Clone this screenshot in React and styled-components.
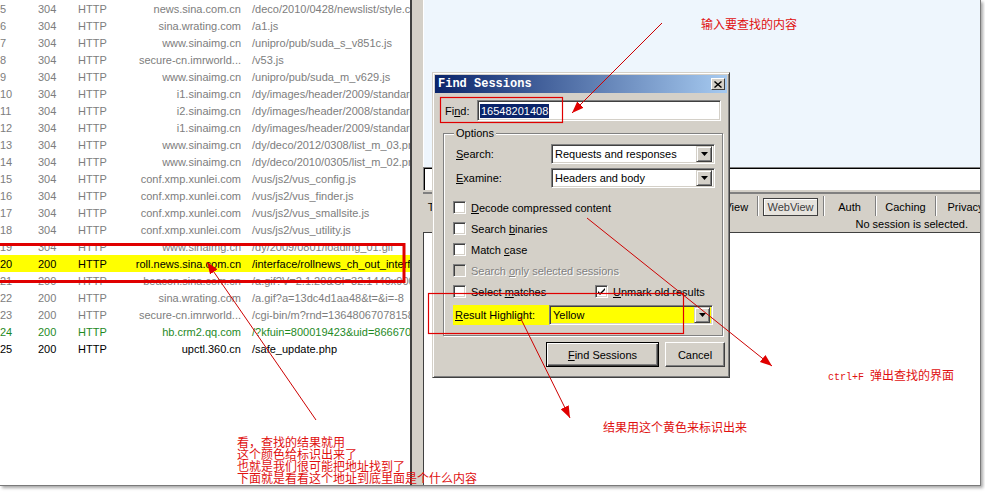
import React from "react";
import styled, { createGlobalStyle } from "styled-components";

const GlobalStyle = createGlobalStyle`
  html, body { margin: 0; padding: 0; background: #fff; }
  body {
    font-family: "Liberation Sans", Arial, sans-serif;
    font-size: 11px;
    color: #000;
  }
`;

const Page = styled.div`
  position: relative;
  width: 985px;
  height: 497px;
  overflow: hidden;
`;

const Shot = styled.div`
  display: flex;
  width: 980px;
  height: 485px;
  overflow: hidden;
  border-right: 1px solid #7a7a7a;
  border-bottom: 1px solid #7a7a7a;
  box-shadow: 2px 2px 3px rgba(0, 0, 0, 0.35);
`;

/* ---------- session list ---------- */

const ListPane = styled.div`
  width: 410px;
  flex: none;
  background: #fff;
  border-right: 2px solid #404040;
  overflow: hidden;
`;

const Row = styled.div`
  display: grid;
  grid-template-columns: 38px 40px 50px 113px 1fr;
  height: 17px;
  align-items: center;
  white-space: nowrap;
  background: ${(p) => (p.$highlight ? "#ffff00" : "transparent")};
  color: ${(p) => p.$tone};
`;

const Cell = styled.span`
  overflow: hidden;
`;

const HostCell = styled(Cell)`
  text-align: right;
`;

const PathCell = styled(Cell)`
  padding-left: 11px;
`;

const Splitter = styled.div`
  width: 11px;
  flex: none;
  background: #d4d0c8;
`;

/* ---------- inspector side ---------- */

const InspectorPane = styled.div`
  flex: 1;
  min-width: 0;
  overflow: hidden;
  display: flex;
  flex-direction: column;
  background: #d4d0c8;
`;

const WebPane = styled.div`
  height: 167px;
  flex: none;
  background: #eef6fd;
  border-left: 1px solid #fff;
  box-sizing: border-box;
`;

const UrlBox = styled.div`
  height: 23px;
  flex: none;
  box-sizing: border-box;
  background: #fff;
  border-top: 1px solid #808080;
  border-left: 1px solid #808080;
  box-shadow: inset 1px 1px 0 #000;
`;

const TabStrip = styled.div`
  height: 42px;
  flex: none;
  display: flex;
  flex-direction: column;
`;

const TabLine = styled.div`
  height: 2px;
  margin-top: 2px;
  background: #808080;
`;

const Tabs = styled.div`
  display: flex;
  height: 20px;
  margin-top: 2px;
  white-space: nowrap;
  overflow: hidden;
`;

const Tab = styled.div`
  width: ${(p) => p.$w}px;
  flex: none;
  display: flex;
  align-items: center;
  justify-content: center;
  border-right: 1px solid #808080;
  box-shadow: 1px 0 0 #fff;
  box-sizing: border-box;
  padding: 2px 5px 1px;
`;

const TabLabel = styled.span`
  display: inline-flex;
  align-items: center;
  justify-content: center;
  height: 16px;
  padding: 0 3px;
  color: ${(p) => (p.$active ? "#404040" : "#000")};
  border: ${(p) => (p.$active ? "1px solid #404040" : "1px solid transparent")};
  box-shadow: ${(p) => (p.$active ? "inset 1px 1px 0 #fff" : "none")};
  background: ${(p) => (p.$active ? "#e6e3dd" : "transparent")};
  width: ${(p) => (p.$active ? "100%" : "auto")};
`;

const Status = styled.div`
  text-align: right;
  padding: 2px 12px 0 0;
  line-height: 13px;
`;

const LowerPane = styled.div`
  flex: 1;
  background: #fff;
  border-top: 1px solid #404040;
  border-left: 1px solid #404040;
`;

/* ---------- Find Sessions dialog ---------- */

const Dialog = styled.div`
  position: absolute;
  left: 432px;
  top: 72px;
  width: 298px;
  height: 306px;
  box-sizing: border-box;
  padding: 2px;
  background: #d4d0c8;
  border: 1px solid;
  border-color: #d4d0c8 #404040 #404040 #d4d0c8;
  box-shadow: inset 1px 1px 0 #fff, inset -1px -1px 0 #808080;
  display: flex;
  flex-direction: column;
  font-size: 11px;
`;

const TitleBar = styled.div`
  height: 18px;
  display: flex;
  align-items: center;
  justify-content: space-between;
  padding: 0 2px 0 3px;
  background: linear-gradient(to right, #0a246a, #a6caf0);
  color: #fff;
  font: bold 12px "Liberation Mono", "Courier New", monospace;
`;

const CloseBtn = styled.div`
  width: 14px;
  height: 12px;
  display: flex;
  align-items: center;
  justify-content: center;
  background: #d4d0c8;
  border: 1px solid;
  border-color: #fff #404040 #404040 #fff;
  box-sizing: border-box;
`;

const DialogBody = styled.div`
  padding: 7px 2px 0 8px;
  display: flex;
  flex-direction: column;
`;

const FindRow = styled.div`
  display: flex;
  align-items: center;
  height: 21px;
  padding: 0 4px 0 2px;
`;

const FieldLabel = styled.span`
  width: ${(p) => (p.$w ? `${p.$w}px` : "auto")};
  flex: none;
  color: ${(p) => (p.$disabled ? "#808080" : "#000")};
  text-shadow: ${(p) => (p.$disabled ? "1px 1px 0 #fff" : "none")};
`;

const Sunken = styled.div`
  box-sizing: border-box;
  border: 1px solid;
  border-color: #808080 #fff #fff #808080;
  box-shadow: inset 1px 1px 0 #404040, inset -1px -1px 0 #d4d0c8;
`;

const TextInput = styled(Sunken)`
  flex: 1;
  height: 21px;
  background: #fff;
  display: flex;
  align-items: center;
  padding-left: 2px;
`;

const Selection = styled.span`
  background: #0a246a;
  color: #fff;
  padding: 0 1px;
  line-height: 14px;
`;

const GroupBox = styled.fieldset`
  margin: 6px 2px 0 0;
  padding: 4px 8px 10px 12px;
  border: 1px solid #808080;
  box-shadow: inset 1px 1px 0 #fff, 1px 1px 0 #fff;
  min-width: 0;
`;

const Legend = styled.legend`
  padding: 0 2px;
  margin-left: -2px;
  background: #d4d0c8;
  line-height: 13px;
`;

const SelectGrid = styled.div`
  display: grid;
  grid-template-columns: 95px 164px;
  row-gap: 4px;
  align-items: center;
`;

const Combo = styled(Sunken)`
  height: 20px;
  display: flex;
  align-items: center;
  padding: 2px;
  background: ${(p) => p.$bg || "#fff"};
`;

const ComboText = styled.span`
  flex: 1;
  padding-left: 1px;
`;

const DropBtn = styled.div`
  width: 16px;
  height: 16px;
  box-sizing: border-box;
  display: flex;
  align-items: center;
  justify-content: center;
  background: #d4d0c8;
  border: 1px solid;
  border-color: #d4d0c8 #404040 #404040 #d4d0c8;
  box-shadow: inset 1px 1px 0 #fff, inset -1px -1px 0 #808080;
`;

const Checks = styled.div`
  margin: 9px 0 0 -3px;
  display: flex;
  flex-direction: column;
`;

const CheckPair = styled.div`
  display: grid;
  grid-template-columns: 142px auto;
`;

const CheckRow = styled.div`
  display: flex;
  align-items: center;
  gap: 5px;
  height: 21px;
`;

const Box = styled(Sunken)`
  width: 13px;
  height: 13px;
  flex: none;
  display: flex;
  align-items: center;
  justify-content: center;
  background: ${(p) => (p.$disabled ? "#d4d0c8" : "#fff")};
`;

const HighlightRow = styled.div`
  display: grid;
  grid-template-columns: 96px 164px;
  margin: 3px 0 0 -3px;
  height: 20px;
  align-items: stretch;
`;

const HighlightLabel = styled.span`
  background: #ffff00;
  padding-left: 2px;
  line-height: 20px;
`;

const ButtonRow = styled.div`
  display: flex;
  justify-content: flex-end;
  gap: 6px;
  margin-top: 6px;
`;

const PushButton = styled.div`
  width: ${(p) => p.$w}px;
  height: 25px;
  box-sizing: border-box;
  display: flex;
  align-items: center;
  justify-content: center;
  background: #d4d0c8;
  border: 1px solid;
  border-color: ${(p) => (p.$default ? "#000" : "#fff #404040 #404040 #fff")};
  box-shadow: ${(p) =>
    p.$default
      ? "inset 1px 1px 0 #fff, inset -1px -1px 0 #404040, inset -2px -2px 0 #808080"
      : "inset -1px -1px 0 #808080"};
`;

/* ---------- annotations ---------- */

const Overlay = styled.svg`
  position: absolute;
  left: 0;
  top: 0;
  pointer-events: none;
`;

const Note = styled.div`
  position: absolute;
  left: ${(p) => p.$x}px;
  top: ${(p) => p.$y}px;
  color: #e01010;
  font-family: "Noto Sans CJK SC", "Liberation Sans", sans-serif;
  font-size: 12px;
  line-height: 12px;
  white-space: nowrap;
`;

const Mono = styled.span`
  font-family: "Liberation Mono", monospace;
  font-size: 10px;
  margin-right: 6px;
`;

const GREY = "#7d7d7d";

const rows = [
  [5, 304, "news.sina.com.cn", "/deco/2010/0428/newslist/style.css"],
  [6, 304, "sina.wrating.com", "/a1.js"],
  [7, 304, "www.sinaimg.cn", "/unipro/pub/suda_s_v851c.js"],
  [8, 304, "secure-cn.imrworld...", "/v53.js"],
  [9, 304, "www.sinaimg.cn", "/unipro/pub/suda_m_v629.js"],
  [10, 304, "i1.sinaimg.cn", "/dy/images/header/2009/standard_adv.gif"],
  [11, 304, "i2.sinaimg.cn", "/dy/images/header/2008/standardl_logo.gif"],
  [12, 304, "i1.sinaimg.cn", "/dy/images/header/2009/standard_adv.gif"],
  [13, 304, "www.sinaimg.cn", "/dy/deco/2012/0308/list_m_03.png"],
  [14, 304, "www.sinaimg.cn", "/dy/deco/2010/0305/list_m_02.png"],
  [15, 304, "conf.xmp.xunlei.com", "/vus/js2/vus_config.js"],
  [16, 304, "conf.xmp.xunlei.com", "/vus/js2/vus_finder.js"],
  [17, 304, "conf.xmp.xunlei.com", "/vus/js2/vus_smallsite.js"],
  [18, 304, "conf.xmp.xunlei.com", "/vus/js2/vus_utility.js"],
  [19, 304, "www.sinaimg.cn", "/dy/2009/0801/loading_01.gif"],
  [20, 200, "roll.news.sina.com.cn", "/interface/rollnews_ch_out_interface.php", "#000", true],
  [21, 200, "beacon.sina.com.cn", "/a.gif?V=2.1.20&CI=32.1440x900"],
  [22, 200, "sina.wrating.com", "/a.gif?a=13dc4d1aa48&t=&i=-8"],
  [23, 200, "secure-cn.imrworld...", "/cgi-bin/m?rnd=13648067078158"],
  [24, 200, "hb.crm2.qq.com", "/?kfuin=800019423&uid=866670", "#1f8a1f"],
  [25, 200, "upctl.360.cn", "/safe_update.php", "#000"],
];

const tabs = [
  ["Transformer", 70],
  ["Headers", 55],
  ["TextView", 70],
  ["ImageView", 78],
  ["HexView", 62],
  ["WebView", 66, true],
  ["Auth", 52],
  ["Caching", 60],
  ["Privacy", 60],
];

const DownArrow = () => (
  <svg width="7" height="4" viewBox="0 0 7 4">
    <path d="M0 0h7L3.5 4z" fill="#000" />
  </svg>
);

const Tick = () => (
  <svg width="9" height="9" viewBox="0 0 9 9">
    <path d="M1 4l2 2 5-5v2l-5 5-2-2z" fill="#000" />
  </svg>
);

const Check = ({ label, checked, disabled }) => (
  <CheckRow>
    <Box $disabled={disabled}>{checked && <Tick />}</Box>
    <FieldLabel $disabled={disabled}>{label}</FieldLabel>
  </CheckRow>
);

const u = (s) => <u>{s}</u>;

export default function App() {
  return (
    <Page>
      <GlobalStyle />
      <Shot>
        <ListPane>
          {rows.map(([n, code, host, path, tone = GREY, hl]) => (
            <Row key={n} $tone={tone} $highlight={hl}>
              <Cell>{n}</Cell>
              <Cell>{code}</Cell>
              <Cell>HTTP</Cell>
              <HostCell>{host}</HostCell>
              <PathCell>{path}</PathCell>
            </Row>
          ))}
        </ListPane>
        <Splitter />
        <InspectorPane>
          <WebPane />
          <UrlBox />
          <TabStrip>
            <TabLine />
            <Tabs>
              {tabs.map(([name, w, active]) => (
                <Tab key={name} $w={w}>
                  <TabLabel $active={active}>{name}</TabLabel>
                </Tab>
              ))}
            </Tabs>
            <Status>No session is selected.</Status>
          </TabStrip>
          <LowerPane />
        </InspectorPane>
      </Shot>

      <Dialog>
        <TitleBar>
          <span>Find Sessions</span>
          <CloseBtn>
            <svg width="8" height="7" viewBox="0 0 8 7">
              <path d="M0.5 0.5l7 6M7.5 0.5l-7 6" stroke="#000" strokeWidth="1.4" />
            </svg>
          </CloseBtn>
        </TitleBar>
        <DialogBody>
          <FindRow>
            <FieldLabel $w={32}>Fi{u("n")}d:</FieldLabel>
            <TextInput>
              <Selection>16548201408</Selection>
            </TextInput>
          </FindRow>
          <GroupBox>
            <Legend>Options</Legend>
            <SelectGrid>
              <FieldLabel>{u("S")}earch:</FieldLabel>
              <Combo>
                <ComboText>Requests and responses</ComboText>
                <DropBtn><DownArrow /></DropBtn>
              </Combo>
              <FieldLabel>{u("E")}xamine:</FieldLabel>
              <Combo>
                <ComboText>Headers and body</ComboText>
                <DropBtn><DownArrow /></DropBtn>
              </Combo>
            </SelectGrid>
            <Checks>
              <Check label={<>{u("D")}ecode compressed content</>} />
              <Check label={<>Search {u("b")}inaries</>} />
              <Check label={<>Match {u("c")}ase</>} />
              <Check label={<>Search {u("o")}nly selected sessions</>} disabled />
              <CheckPair>
                <Check label={<>Select {u("m")}atches</>} />
                <Check label={<>{u("U")}nmark old results</>} checked />
              </CheckPair>
            </Checks>
            <HighlightRow>
              <HighlightLabel>{u("R")}esult Highlight:</HighlightLabel>
              <Combo $bg="#ffff00">
                <ComboText>Yellow</ComboText>
                <DropBtn><DownArrow /></DropBtn>
              </Combo>
            </HighlightRow>
          </GroupBox>
          <ButtonRow>
            <PushButton $w={113} $default>{u("F")}ind Sessions</PushButton>
            <PushButton $w={60}>Cancel</PushButton>
          </ButtonRow>
        </DialogBody>
      </Dialog>

      <Overlay width="985" height="497" viewBox="0 0 985 497">
        <defs>
          <marker id="head" viewBox="0 0 12 9" refX="12" refY="4.5" markerWidth="12" markerHeight="9" markerUnits="userSpaceOnUse" orient="auto">
            <path d="M0 0L12 4.5L0 9z" fill="#e00000" />
          </marker>
        </defs>
        <g fill="none" stroke="#e00000">
          <rect x="-2" y="244.5" width="406" height="37" strokeWidth="3" />
          <rect x="440.5" y="97.5" width="122" height="25" strokeWidth="1.2" />
          <rect x="428.5" y="293.5" width="255" height="40" strokeWidth="1.2" />
        </g>
        <g stroke="#cc0000" strokeWidth="1" markerEnd="url(#head)">
          <line x1="662" y1="23" x2="572" y2="113" />
          <line x1="587" y1="218" x2="772" y2="366" />
          <line x1="520" y1="317" x2="570" y2="418" />
          <line x1="316" y1="420" x2="207" y2="262" />
        </g>
      </Overlay>

      <Note $x={701} $y={18}>输入要查找的内容</Note>
      <Note $x={828} $y={369}>
        <Mono>ctrl+F</Mono>弹出查找的界面
      </Note>
      <Note $x={603} $y={421}>结果用这个黄色来标识出来</Note>
      <Note $x={237} $y={436}>
        看，查找的结果就用
        <br />
        这个颜色给标识出来了
        <br />
        也就是我们很可能把地址找到了
        <br />
        下面就是看看这个地址到底里面是个什么内容
      </Note>
    </Page>
  );
}
